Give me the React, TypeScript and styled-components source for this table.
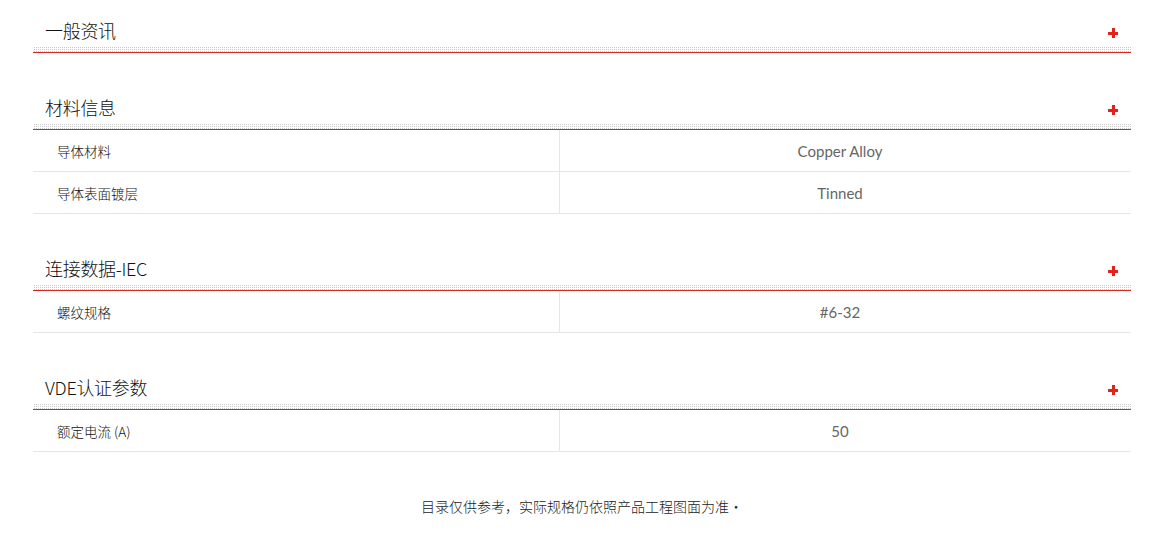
import React from "react";
import styled, { createGlobalStyle } from "styled-components";

interface Row {
    label: string;
    value: string;
}

interface Section {
    title: string;
    rows: Row[];
}

const sections: Section[] = [
    { title: "一般资讯", rows: [] },
    {
        title: "材料信息",
        rows: [
            { label: "导体材料", value: "Copper Alloy" },
            { label: "导体表面镀层", value: "Tinned" },
        ],
    },
    { title: "连接数据-IEC", rows: [{ label: "螺纹规格", value: "#6-32" }] },
    { title: "VDE认证参数", rows: [{ label: "额定电流 (A)", value: "50" }] },
];

const App: React.FC = () => {
    return (
        <>
            <GlobalStyle />
            <Page>
                {sections.map((s) => (
                    <Block key={s.title}>
                        <Header>
                            <h3>{s.title}</h3>
                            <Plus />
                        </Header>
                        <Rule />
                        {s.rows.map((r) => (
                            <SpecRow key={r.label}>
                                <div className="label">{r.label}</div>
                                <div className="value">{r.value}</div>
                            </SpecRow>
                        ))}
                    </Block>
                ))}
                <Note>目录仅供参考，实际规格仍依照产品工程图面为准·</Note>
            </Page>
        </>
    );
};

const GlobalStyle = createGlobalStyle`
    body{
        margin:0;
        background:#fff;
        font-family:"Noto Sans CJK SC","Noto Sans",sans-serif;
        color:#222;
    }
`;

const Page = styled.div`
    padding:14px 35px 0 33px;
`;

const Block = styled.section`
    margin-bottom:38px;
`;

const Header = styled.div`
    display:flex;
    justify-content:space-between;
    align-items:center;
    height:32px;
    padding:0 13px 0 12px;
    h3{
        margin:0;
        font-size:18px;
        font-weight:300;
        line-height:32px;
        color:#111;
        letter-spacing:-0.3px;
    }
`;

const Plus = styled.span`
    position:relative;
    width:10px;
    height:10px;
    margin-top:6px;
    &::before,&::after{
        content:"";
        position:absolute;
        background:#e2231a;
    }
    &::before{
        left:0;
        top:4px;
        width:10px;
        height:2.5px;
    }
    &::after{
        top:0;
        left:4px;
        width:2.5px;
        height:10px;
    }
`;

const Rule = styled.div`
    height:7px;
    box-sizing:border-box;
    border-bottom:1px solid #d9261c;
    background-image:
        linear-gradient(90deg, #fff 1px, transparent 1px),
        linear-gradient(#fff 1px, #c8c8c8 1px);
    background-size:2px 2px;
    background-position:0 0;
    background-repeat:repeat;
`;

const SpecRow = styled.div`
    display:grid;
    grid-template-columns:527px 1fr;
    height:41px;
    border-bottom:1px solid #e6e6e6;
    .label{
        display:flex;
        align-items:center;
        padding-left:24px;
        font-size:13.5px;
        font-weight:300;
        color:#111;
        border-right:1px solid #e6e6e6;
    }
    .value{
        display:flex;
        align-items:center;
        justify-content:center;
        padding-right:11px;
        font-family:Lato,"Open Sans",sans-serif;
        font-size:15px;
        color:#666;
    }
`;

const Note = styled.p`
    margin:44px 0 0;
    text-align:center;
    font-size:14px;
    font-weight:300;
    color:#222;
`;

export default App;
